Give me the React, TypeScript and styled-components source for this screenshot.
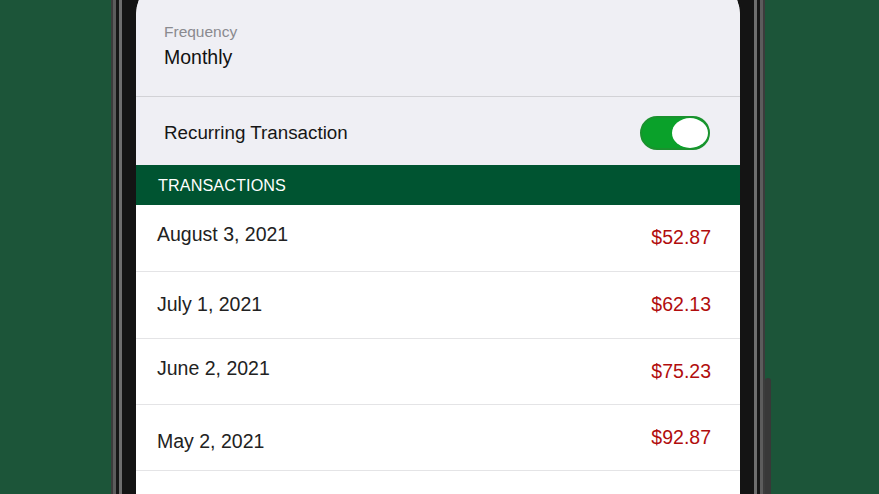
import React from "react";
import styled, { createGlobalStyle } from "styled-components";

const GlobalStyle = createGlobalStyle`
  html, body {
    margin: 0;
    padding: 0;
    background: #1c5539;
  }
  body {
    font-family: "Liberation Sans", Arial, sans-serif;
  }
`;

const Stage = styled.div`
  width: 879px;
  height: 494px;
  overflow: hidden;
  display: flex;
  justify-content: center;
  align-items: flex-start;
  padding-right: 3px;
  box-sizing: border-box;
  background: #1c5539;
`;

const Phone = styled.div`
  position: relative;
  margin-top: -80px;
  width: 604px;
  height: 620px;
  padding: 55px 14px 0;
  background: #141414;
  border-radius: 70px 70px 0 0;
  box-shadow: 0 0 0 3px #6e6e6e, 0 0 0 6px #161616, 0 0 0 9px #5c5c5c,
    0 0 0 11px #3c3c3c;
`;

const SideButton = styled.div`
  position: absolute;
  right: -17px;
  top: 458px;
  width: 6px;
  height: 140px;
  border-radius: 3px 3px 0 0;
  background: #383838;
`;

const Screen = styled.div`
  width: 604px;
  height: 100%;
  background: #ffffff;
  border-radius: 40px 40px 0 0;
  overflow: hidden;
  display: flex;
  flex-direction: column;
`;

const FrequencyBlock = styled.div`
  box-sizing: border-box;
  height: 122px;
  padding: 47px 28px 0;
  background: #efeff4;
  border-bottom: 1px solid #d2d2d6;
  display: flex;
  flex-direction: column;
  gap: 3px;
`;

const FieldLabel = styled.div`
  font-size: 15.5px;
  line-height: 20px;
  color: #8a8a8f;
`;

const FieldValue = styled.div`
  font-size: 19.5px;
  line-height: 24px;
  color: #111111;
`;

const ToggleRow = styled.div`
  box-sizing: border-box;
  height: 68px;
  padding: 0 30px 0 28px;
  background: #efeff4;
  display: flex;
  align-items: center;
  justify-content: space-between;
`;

const ToggleLabel = styled.span`
  font-size: 18.8px;
  color: #161616;
  margin-top: 4px;
`;

const Switch = styled.div<{ $on: boolean }>`
  box-sizing: border-box;
  width: 70px;
  height: 34px;
  border-radius: 17px;
  border: 2px solid ${({ $on }) => ($on ? "#1a922e" : "#d0d0d4")};
  background: ${({ $on }) => ($on ? "#0aa12a" : "#e6e6ea")};
  display: flex;
  align-items: center;
  justify-content: ${({ $on }) => ($on ? "flex-end" : "flex-start")};
  margin-top: 4px;
`;

const Knob = styled.div`
  width: 36px;
  height: 30px;
  border-radius: 50%;
  background: #ffffff;
`;

const SectionHeader = styled.div`
  box-sizing: border-box;
  height: 40px;
  padding: 0 22px;
  background: #005431;
  color: #ffffff;
  font-size: 16.2px;
  display: flex;
  align-items: center;
  letter-spacing: 0.1px;
`;

const Row = styled.div<{ $height: number }>`
  box-sizing: border-box;
  flex-shrink: 0;
  height: ${({ $height }) => $height}px;
  padding: 0 29px 0 21px;
  border-bottom: 1px solid #e4e4e6;
  display: flex;
  justify-content: space-between;
  align-items: flex-start;
`;

const DateText = styled.span<{ $top: number }>`
  padding-top: ${({ $top }) => $top}px;
  font-size: 19.5px;
  line-height: 24px;
  color: #222222;
`;

const Amount = styled.span`
  padding-top: 20px;
  font-size: 19.5px;
  line-height: 24px;
  color: #b10d0d;
`;

const transactions = [
  { date: "August 3, 2021", amount: "$52.87", top: 17, height: 67 },
  { date: "July 1, 2021", amount: "$62.13", top: 20, height: 67 },
  { date: "June 2, 2021", amount: "$75.23", top: 17, height: 66 },
  { date: "May 2, 2021", amount: "$92.87", top: 24, height: 66 },
  { date: "", amount: "", top: 20, height: 66 },
];

export default function App() {
  return (
    <>
      <GlobalStyle />
      <Stage>
        <Phone>
          <SideButton />
          <Screen>
            <FrequencyBlock>
              <FieldLabel>Frequency</FieldLabel>
              <FieldValue>Monthly</FieldValue>
            </FrequencyBlock>
            <ToggleRow>
              <ToggleLabel>Recurring Transaction</ToggleLabel>
              <Switch $on>
                <Knob />
              </Switch>
            </ToggleRow>
            <SectionHeader>TRANSACTIONS</SectionHeader>
            {transactions.map((t, i) => (
              <Row key={i} $height={t.height}>
                <DateText $top={t.top}>{t.date}</DateText>
                <Amount>{t.amount}</Amount>
              </Row>
            ))}
          </Screen>
        </Phone>
      </Stage>
    </>
  );
}
